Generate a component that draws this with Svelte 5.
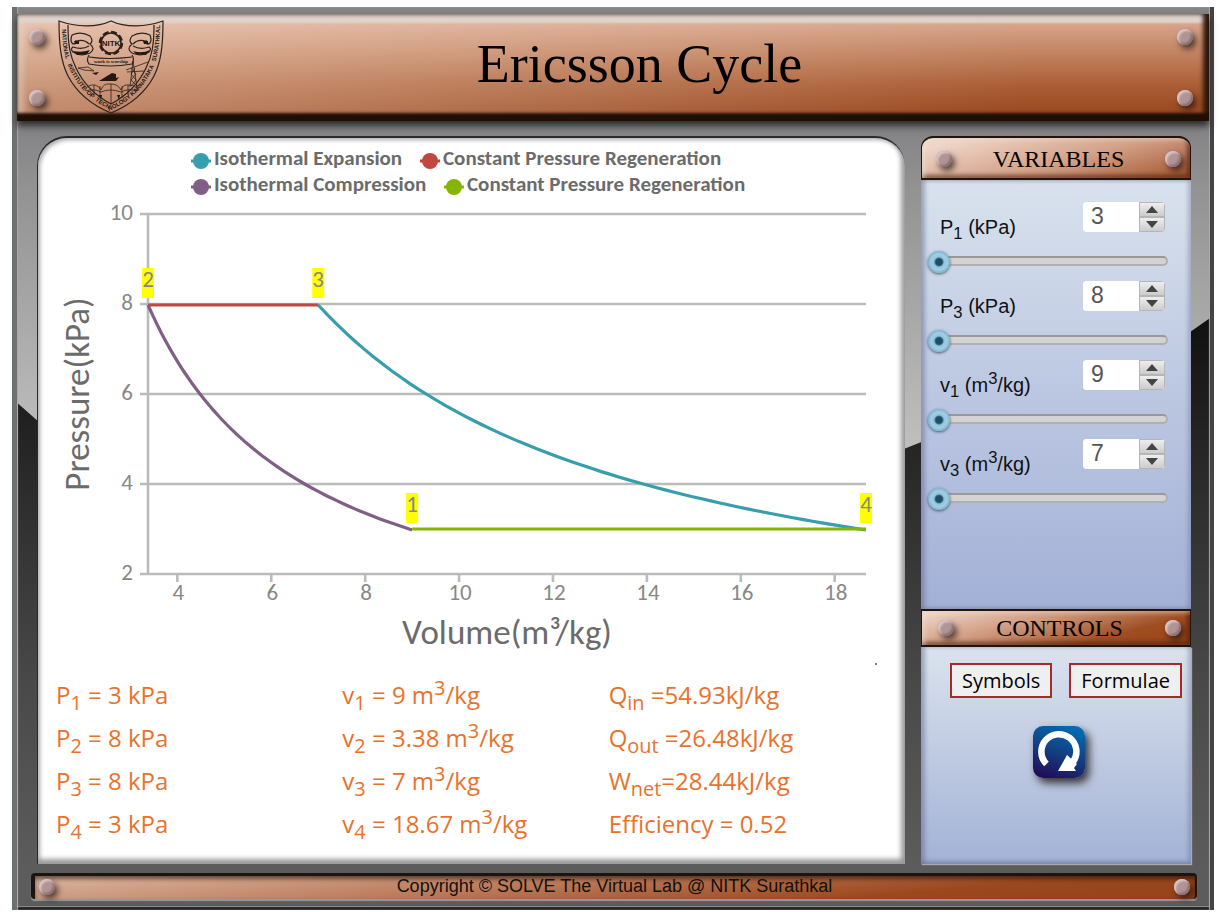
<script>
  const variables = $state([
    { id: 'p1', symbol: 'P', index: 1, power: false, value: 3, min: 3, max: 7 },
    { id: 'p3', symbol: 'P', index: 3, power: false, value: 8, min: 8, max: 15 },
    { id: 'v1', symbol: 'v', index: 1, power: true, value: 9, min: 9, max: 15 },
    { id: 'v3', symbol: 'v', index: 3, power: true, value: 7, min: 7, max: 12 }
  ]);

  const p1 = $derived(variables[0].value);
  const p3 = $derived(variables[1].value);
  const v1 = $derived(variables[2].value);
  const v3 = $derived(variables[3].value);
  const v2 = $derived((p1 * v1) / p3);
  const v4 = $derived((p3 * v3) / p1);
  const qIn = $derived(p3 * v3 * Math.log(p3 / p1));
  const qOut = $derived(p1 * v1 * Math.log(p3 / p1));
  const wNet = $derived(qIn - qOut);

  const show = (n) => (Number.isInteger(n) ? String(n) : n.toFixed(2));

  // Plot area inside the chart's view box
  const plot = { left: 110, right: 828, top: 78, bottom: 438 };
  const yMin = $derived(2 * Math.floor((p1 - 1) / 2));
  const yMax = $derived(2 * Math.ceil((p3 + 1) / 2));
  const xMin = $derived(Math.min(v2, v3));
  const xMax = $derived(Math.max(v4, v1));
  const sx = $derived((v) => plot.left + ((v - xMin) / (xMax - xMin)) * (plot.right - plot.left));
  const sy = $derived((p) => plot.bottom - ((p - yMin) / (yMax - yMin)) * (plot.bottom - plot.top));

  function evens(from, to) {
    const out = [];
    for (let n = 2 * Math.ceil(from / 2); n <= to; n += 2) out.push(n);
    return out;
  }

  function isotherm(from, to, k) {
    const pts = [];
    for (let i = 0; i <= 60; i++) {
      const v = from + ((to - from) * i) / 60;
      pts.push(`${sx(v).toFixed(1)},${(sy(k / v) + 1).toFixed(1)}`);
    }
    return pts.join(' ');
  }

  const marks = $derived([
    { n: 2, x: sx(v2), y: sy(p3) },
    { n: 3, x: sx(v3), y: sy(p3) },
    { n: 1, x: sx(v1), y: sy(p1) },
    { n: 4, x: sx(v4), y: sy(p1) }
  ]);

  const legend = [
    { x: 163, y: 24, color: '#369ead', text: 'Isothermal Expansion' },
    { x: 392, y: 24, color: '#c24642', text: 'Constant Pressure Regeneration' },
    { x: 163, y: 50, color: '#7f6084', text: 'Isothermal Compression' },
    { x: 416, y: 50, color: '#86b402', text: 'Constant Pressure Regeneration' }
  ];

  // Words round the crest's rim, with their distance along it
  const rim = [
    { at: 4, word: 'NATIONAL' },
    { at: 40, word: 'INSTITUTE' },
    { at: 74, word: 'OF' },
    { at: 86, word: 'TECHNOLOGY' },
    { at: 130, word: 'KARNATAKA' },
    { at: 172, word: 'SURATHKAL' }
  ];

  function step(item, by) {
    item.value = Math.min(item.max, Math.max(item.min, item.value + by));
  }

  function reset() {
    for (const item of variables) item.value = item.min;
  }
</script>

<div class="page">
  <div class="frame">
    <header>
      <svg class="crest" viewBox="0 0 106 94" role="img" aria-label="NITK crest">
        <defs>
          <path id="rim" d="M4 5C4 24 6 39 13 52C22 70 36 82 53 90C70 82 84 70 93 52C100 39 102 24 102 5" />
        </defs>
        <g fill="none" stroke="#2d211c" stroke-width="1.2">
          <path d="M1 1C18 7 38 8 53 1C68 8 88 7 105 1C105 26 103 42 96 56C86 75 70 86 53 93C36 86 20 75 10 56C3 42 1 26 1 1Z" />
          <path d="M10 5C10 25 12 36 18 48C26 65 38 76 53 84C68 76 80 65 88 48C94 36 96 25 96 5" />
          <circle cx="53" cy="23" r="11" stroke-width="2.4" stroke-dasharray="6 2.6" />
          <circle cx="53" cy="23" r="10" stroke-width="1.6" />
          <path d="M14 15q9-4 18 1q4 5 0 8q6 5 0 9q-9 4-17-1q-3-3 0-5q9 3 16-1M14 15q-2 5 0 8q2 2 4 0v-3M19 21q7-2 12 3" />
          <path d="M92 15q-9-4-18 1q-4 5 0 8q-6 5 0 9q9 4 17-1q3-3 0-5q-9 3-16-1M92 15q2 5 0 8q-2 2-4 0v-3M87 21q-7-2-12 3" />
          <path d="M31 35q-3 5 0 9q21 4 43 0q3-5 0-9M31 37q20 3 43 0" />
          <path d="M27 71q2-7 10-6q4 1 6 5q2-7 10-6q7 0 10 6q2-6 8-5q7 0 9 6M28 71q7-3 15 1q9-4 20 0q8-4 16-1M36 65v12M42 66v12M53 64v20M64 66v12M70 65v10" stroke-width=".8" />
          <path d="M75 41L72 67M75 41L79 67M73 48L78 54L73 60L79 66M77 48L73 54L78 60L73 66M68 50L90 42M69 52L86 51" stroke-width=".8" />
          <path d="M20 48L30 47L36 51L26 50Z" stroke-width=".8" />
        </g>
        <g fill="#211713">
          <path d="M34 53l7-1-3 3zM41 61l13-8 4 1v4l3-1-3 4H43zM15 31q9 2 17-1l-3 4-10 1zM75 31q9 3 17-1l-4 5-10-1zM41 75h3l-1 5zM59 75h3l-1 5zM16 21h5v3h-4zM85 21h5v3h-4z" />
          <text class="crest-name" x="53" y="26" text-anchor="middle">NITK</text>
          <text class="crest-motto" x="53" y="43" text-anchor="middle">work is worship</text>
          {#each rim as part}
            <text class="crest-rim"><textPath href="#rim" startOffset={part.at}>{part.word}</textPath></text>
          {/each}
        </g>
      </svg>
      <h1>Ericsson Cycle</h1>
      <i class="rivet tl"></i><i class="rivet bl"></i><i class="rivet tr"></i><i class="rivet br"></i>
    </header>

    <main>
      <section class="board">
        <svg class="chart" viewBox="0 2 867 535" role="img" aria-label="Pressure against volume">
          {#each legend as item}
            <line x1={item.x - 10} x2={item.x + 10} y1={item.y + 1} y2={item.y + 1} stroke={item.color} stroke-width="3" />
            <circle cx={item.x} cy={item.y + 1} r="8" fill={item.color} />
            <text class="key" x={item.x + 13} y={item.y + 5}>{item.text}</text>
          {/each}

          <g stroke="#bbb" stroke-width="2.6">
            {#each evens(yMin, yMax) as p}
              <line x1={plot.left - 8} x2={plot.right} y1={sy(p)} y2={sy(p)} />
            {/each}
            <line x1={plot.left} x2={plot.left} y1={plot.top} y2={plot.bottom} />
            {#each evens(xMin, xMax) as v}
              <line x1={sx(v)} x2={sx(v)} y1={plot.bottom} y2={plot.bottom + 8} />
            {/each}
          </g>
          {#each evens(yMin, yMax) as p}
            <text class="tick" x="95" y={sy(p) + 6} text-anchor="end">{p}</text>
          {/each}
          {#each evens(xMin, xMax) as v}
            <text class="tick" x={sx(v) + 1} y="464" text-anchor="middle">{v}</text>
          {/each}

          <g fill="none" stroke-width="3.2">
            <polyline points={isotherm(v3, v4, p3 * v3)} stroke="#369ead" />
            <line x1={sx(v2)} x2={sx(v3)} y1={sy(p3) + 1} y2={sy(p3) + 1} stroke="#c24642" />
            <polyline points={isotherm(v2, v1, p1 * v1)} stroke="#7f6084" />
            <line x1={sx(v1)} x2={sx(v4)} y1={sy(p1)} y2={sy(p1)} stroke="#86b402" />
          </g>
          {#each marks as mark}
            <rect x={mark.x - 6} y={mark.y - 36} width="12" height="30" fill="#ff0" />
            <text class="tick" x={mark.x} y={mark.y - 17} text-anchor="middle">{mark.n}</text>
          {/each}

          <text class="axis" x="469" y="508" text-anchor="middle">Volume(m³/kg)</text>
          <text class="axis" transform="translate(51 258) rotate(-90)" text-anchor="middle">Pressure(kPa)</text>
          <rect x="837" y="527" width="2" height="2" fill="#777" />
        </svg>

        <div class="results">
          <p>P<sub>1</sub> = {show(p1)} kPa</p>
          <p>v<sub>1</sub> = {show(v1)} m<sup>3</sup>/kg</p>
          <p>Q<sub>in</sub> ={qIn.toFixed(2)}kJ/kg</p>
          <p>P<sub>2</sub> = {show(p3)} kPa</p>
          <p>v<sub>2</sub> = {show(v2)} m<sup>3</sup>/kg</p>
          <p>Q<sub>out</sub> ={qOut.toFixed(2)}kJ/kg</p>
          <p>P<sub>3</sub> = {show(p3)} kPa</p>
          <p>v<sub>3</sub> = {show(v3)} m<sup>3</sup>/kg</p>
          <p>W<sub>net</sub>={wNet.toFixed(2)}kJ/kg</p>
          <p>P<sub>4</sub> = {show(p1)} kPa</p>
          <p>v<sub>4</sub> = {show(v4)} m<sup>3</sup>/kg</p>
          <p>Efficiency = {(wNet / qIn).toFixed(2)}</p>
        </div>
      </section>

      <aside>
        <h2 class="first"><i class="rivet"></i>VARIABLES<i class="rivet"></i></h2>
        <div class="variables">
          {#each variables as item (item.id)}
            <div class="variable">
              <div class="head">
                <label for={item.id}>{item.symbol}<sub>{item.index}</sub> {#if item.power}(m<sup>3</sup>/kg){:else}(kPa){/if}</label>
                <div class="spinner">
                  <input id={item.id} type="number" min={item.min} max={item.max} bind:value={item.value} />
                  <div class="steps">
                    <button type="button" aria-label="Increase" onclick={() => step(item, 1)}>
                      <svg viewBox="0 0 12 7"><path d="M6 0L12 7H0Z" /></svg>
                    </button>
                    <button type="button" aria-label="Decrease" onclick={() => step(item, -1)}>
                      <svg viewBox="0 0 12 7"><path d="M0 0H12L6 7Z" /></svg>
                    </button>
                  </div>
                </div>
              </div>
              <input class="slider" type="range" aria-labelledby={item.id} min={item.min} max={item.max} bind:value={item.value} />
            </div>
          {/each}
        </div>
        <h2><i class="rivet"></i>CONTROLS<i class="rivet"></i></h2>
        <div class="controls">
          <div class="links">
            <button type="button">Symbols</button>
            <button type="button">Formulae</button>
          </div>
          <button class="reset" type="button" aria-label="Reset" onclick={reset}>
            <svg viewBox="0 0 52 52">
              <path d="M13.5 38A17.5 17.5 0 1 1 40 36" fill="none" stroke="#fff" stroke-width="6.5" />
              <path d="M34 29L44 38L41 42L43 45H25Z" fill="#fff" />
            </svg>
          </button>
        </div>
      </aside>
    </main>

    <footer>
      <i class="rivet"></i>
      <span>Copyright © SOLVE The Virtual Lab @ NITK Surathkal</span>
      <i class="rivet"></i>
    </footer>
  </div>
</div>

<style>
  :global(body) {
    background: #fff;
  }

  .page {
    padding: 7px 6px 3px 12px;
    font-family: 'Liberation Sans', Arial, sans-serif;
  }

  .page * {
    box-sizing: border-box;
  }

  .frame {
    position: relative;
    z-index: 0;
    display: flex;
    flex-direction: column;
    padding: 7px 5px 11px;
    background: linear-gradient(#858588 0, #858588 14%, #929292 20%, #c4c4c4 52%, #c4c4c4);
    box-shadow: inset 0 -3px 1px #222, inset 2px 0 1px #aaa;
  }

  .frame::before {
    content: '';
    position: absolute;
    inset: 0;
    z-index: -1;
    background: linear-gradient(#101010 34%, #2a2a2a 52%, #494949 75%, #5c5c5c 95%);
    clip-path: polygon(0.5% 43.9%, 2.1% 45.8%, 74.3% 48.9%, 75.6% 48.2%, 98.1% 35.9%, 99.7% 34.4%, 99.7% 99.6%, 0.5% 99.6%);
  }

  .frame::after {
    content: '';
    position: absolute;
    inset: 0;
    z-index: -1;
    border: solid #6d7070;
    border-width: 0 4px 0 5px;
    border-right-color: #444;
    box-shadow: inset 1px 0 1px #aaa, inset -1px 0 1px #aaa;
  }

  header {
    position: relative;
    display: flex;
    align-items: center;
    height: 107px;
    padding: 0 94px 0 41px;
    background:
      linear-gradient(to right, rgba(255, 240, 228, 0.4), rgba(255, 240, 228, 0) 85%),
      linear-gradient(#d8a58c 8%, #c38564 35%, #ac6038 65%, #9a481f 92%);
    box-shadow:
      inset 0 -8px 3px #1e0e05,
      inset -6px 0 4px #351a0c,
      inset 0 9px 2px #dfd3cc,
      inset 7px 0 5px rgba(235, 215, 205, 0.4),
      0 5px 7px #2c2c2c;
  }

  .crest {
    width: 106px;
    height: 94px;
    flex: none;
    margin-bottom: 1px;
  }

  .crest-name {
    font: bold 8px 'Liberation Sans', sans-serif;
  }

  .crest-motto {
    font: bold 5px 'Liberation Serif', serif;
  }

  .crest-rim {
    font: bold 6px 'Liberation Sans', sans-serif;
  }

  h1 {
    flex: 1;
    margin: 0;
    padding-bottom: 8px;
    text-align: center;
    font: 54px 'Liberation Serif', 'Times New Roman', serif;
    color: #000;
  }

  .rivet {
    display: block;
    width: 16px;
    height: 16px;
    flex: none;
    border-radius: 50%;
    background: #b39494;
    box-shadow: inset 2px 2px 2px #d8c6c8, inset -2px -2px 2px #8a7074, 3px 4px 6px rgba(30, 15, 10, 0.7);
  }

  header .rivet {
    position: absolute;
  }

  .tl, .tr { top: 15px; }
  .bl, .br { top: 76px; }
  .tl, .bl { left: 12px; }
  .tr, .br { right: 16px; }

  main {
    display: flex;
    gap: 16px;
    margin: 15px 18px 0 20px;
  }

  .board {
    flex: 1;
    min-width: 0;
    padding-bottom: 19px;
    border: solid #2a2a2a;
    border-width: 2px 0 0 1px;
    border-radius: 30px 30px 0 0;
    background: #fff;
    box-shadow: inset -4px -5px 5px #999, inset 2px 2px 4px #aaa;
  }

  .chart {
    display: block;
    width: 100%;
    font-family: Carlito, Lato, sans-serif;
  }

  .key {
    font-size: 21px;
    font-weight: 700;
    fill: #6b6b6b;
  }

  .tick {
    font-size: 23px;
    fill: #888;
  }

  .axis {
    font-size: 35px;
    fill: #6b6b6b;
  }

  .results {
    display: grid;
    grid-template-columns: 286fr 266fr 296fr;
    padding-left: 18px;
    font: 24px/43px 'Comic Sans MS', 'Open Sans', sans-serif;
    color: #e8722c;
  }

  .results p {
    margin: 0;
    white-space: nowrap;
  }

  sub, sup {
    font-size: 83%;
    line-height: 0;
  }

  aside {
    display: flex;
    flex-direction: column;
    width: 270px;
    flex: none;
  }

  h2 {
    display: flex;
    align-items: center;
    justify-content: space-between;
    height: 38px;
    margin: 0;
    padding: 0 9px 0 16px;
    font: 24px 'Liberation Serif', 'Times New Roman', serif;
    color: #000;
    border: 1px solid #24130a;
    border-width: 2px 1px;
    background: linear-gradient(165deg, #ecd3c5 5%, #cd9579 40%, #a04d22 72%, #9a4318);
    box-shadow: inset 3px 2px 4px rgba(240, 225, 215, 0.5), inset -3px -3px 4px rgba(60, 20, 5, 0.6);
  }

  .first {
    height: 44px;
    padding: 2px 9px 0 14px;
    border-radius: 12px 12px 0 0;
    background: linear-gradient(165deg, #efd6c8 10%, #d3a188 55%, #a85c36 95%);
  }

  .variables {
    flex: 1;
    padding: 22px 23px 22px 7px;
    background: linear-gradient(#d9e2ed, #bdc9e2 47%, #a3b0d6);
    box-shadow: inset 4px 0 4px rgba(80, 95, 130, 0.45), inset -3px 0 4px rgba(80, 95, 130, 0.35);
  }

  .variable {
    height: 79px;
  }

  .head {
    display: flex;
    align-items: flex-start;
    justify-content: space-between;
    height: 47px;
    padding: 0 3px 0 12px;
  }

  label {
    margin-top: 13px;
    font-size: 20px;
    line-height: 24px;
    color: #111;
  }

  .spinner {
    display: flex;
    height: 30px;
    border-radius: 4px;
    overflow: hidden;
    background: #fff;
  }

  .spinner input {
    width: 56px;
    padding: 0 8px 2px;
    border: 0;
    background: #fff;
    font: 23px 'Liberation Sans', Arial, sans-serif;
    color: #555;
    appearance: textfield;
  }

  .spinner input::-webkit-inner-spin-button {
    appearance: none;
    margin: 0;
  }

  .steps {
    display: flex;
    flex-direction: column;
    width: 26px;
  }

  .steps button {
    flex: 1;
    display: grid;
    place-items: center;
    padding: 0;
    border: 1px solid #b5b5b5;
    background: linear-gradient(#eee, #ccc);
  }

  .steps svg {
    width: 12px;
    height: 7px;
    fill: #444;
  }

  .slider {
    display: block;
    width: 100%;
    height: 24px;
    margin: 0;
    appearance: none;
    background: none;
  }

  .slider::-webkit-slider-runnable-track {
    height: 10px;
    border: 2px solid #b0b0b0;
    border-top-color: #999;
    border-radius: 5px;
    background: #d3d3d3;
  }

  .slider::-webkit-slider-thumb {
    appearance: none;
    width: 22px;
    height: 22px;
    margin: -7px 0 0 -2px;
    border-radius: 50%;
    background: radial-gradient(circle, #1f4c66 0 3px, #43718b 4px, #92c3dd 5px, #a0cfe6 8px, #7eb0cc 11px);
    box-shadow: 0 1px 3px #456;
  }

  .controls {
    display: flex;
    flex-direction: column;
    align-items: center;
    gap: 28px;
    height: 217px;
    padding: 16px 9px 0 29px;
    background: linear-gradient(#dae2ed, #c2cde3 45%, #a3b2d6);
    box-shadow: inset 4px 0 4px rgba(80, 95, 130, 0.45), inset -3px -3px 4px rgba(80, 95, 130, 0.35), 1px 1px 1px #aaa;
  }

  .links {
    display: flex;
    justify-content: space-between;
    width: 100%;
  }

  .links button {
    height: 35px;
    padding: 0 10px;
    border: 2px solid #a52a2a;
    background: #efefef;
    font: 20px 'Comic Sans MS', 'Open Sans', sans-serif;
    color: #000;
  }

  .reset {
    width: 52px;
    height: 52px;
    margin-right: 14px;
    padding: 0;
    border: 0;
    border-radius: 10px;
    background: linear-gradient(200deg, #0073bd, #134083 50%, #220650);
    box-shadow: 4px 5px 8px #333;
  }

  .reset svg {
    display: block;
  }

  footer {
    display: flex;
    align-items: center;
    justify-content: space-between;
    height: 26px;
    margin: 9px 12px 0 14px;
    padding: 0 5px 2px 4px;
    font-size: 18px;
    color: #111;
    border: solid #1b1512;
    border-width: 3px 2px 0 4px;
    border-radius: 4px;
    background: linear-gradient(175deg, #dcb7a3, #bd7d5d 40%, #9c481e 75%, #96421a);
    box-shadow: inset 0 3px 4px rgba(30, 10, 5, 0.6), 0 2px 1px #999;
  }
</style>
